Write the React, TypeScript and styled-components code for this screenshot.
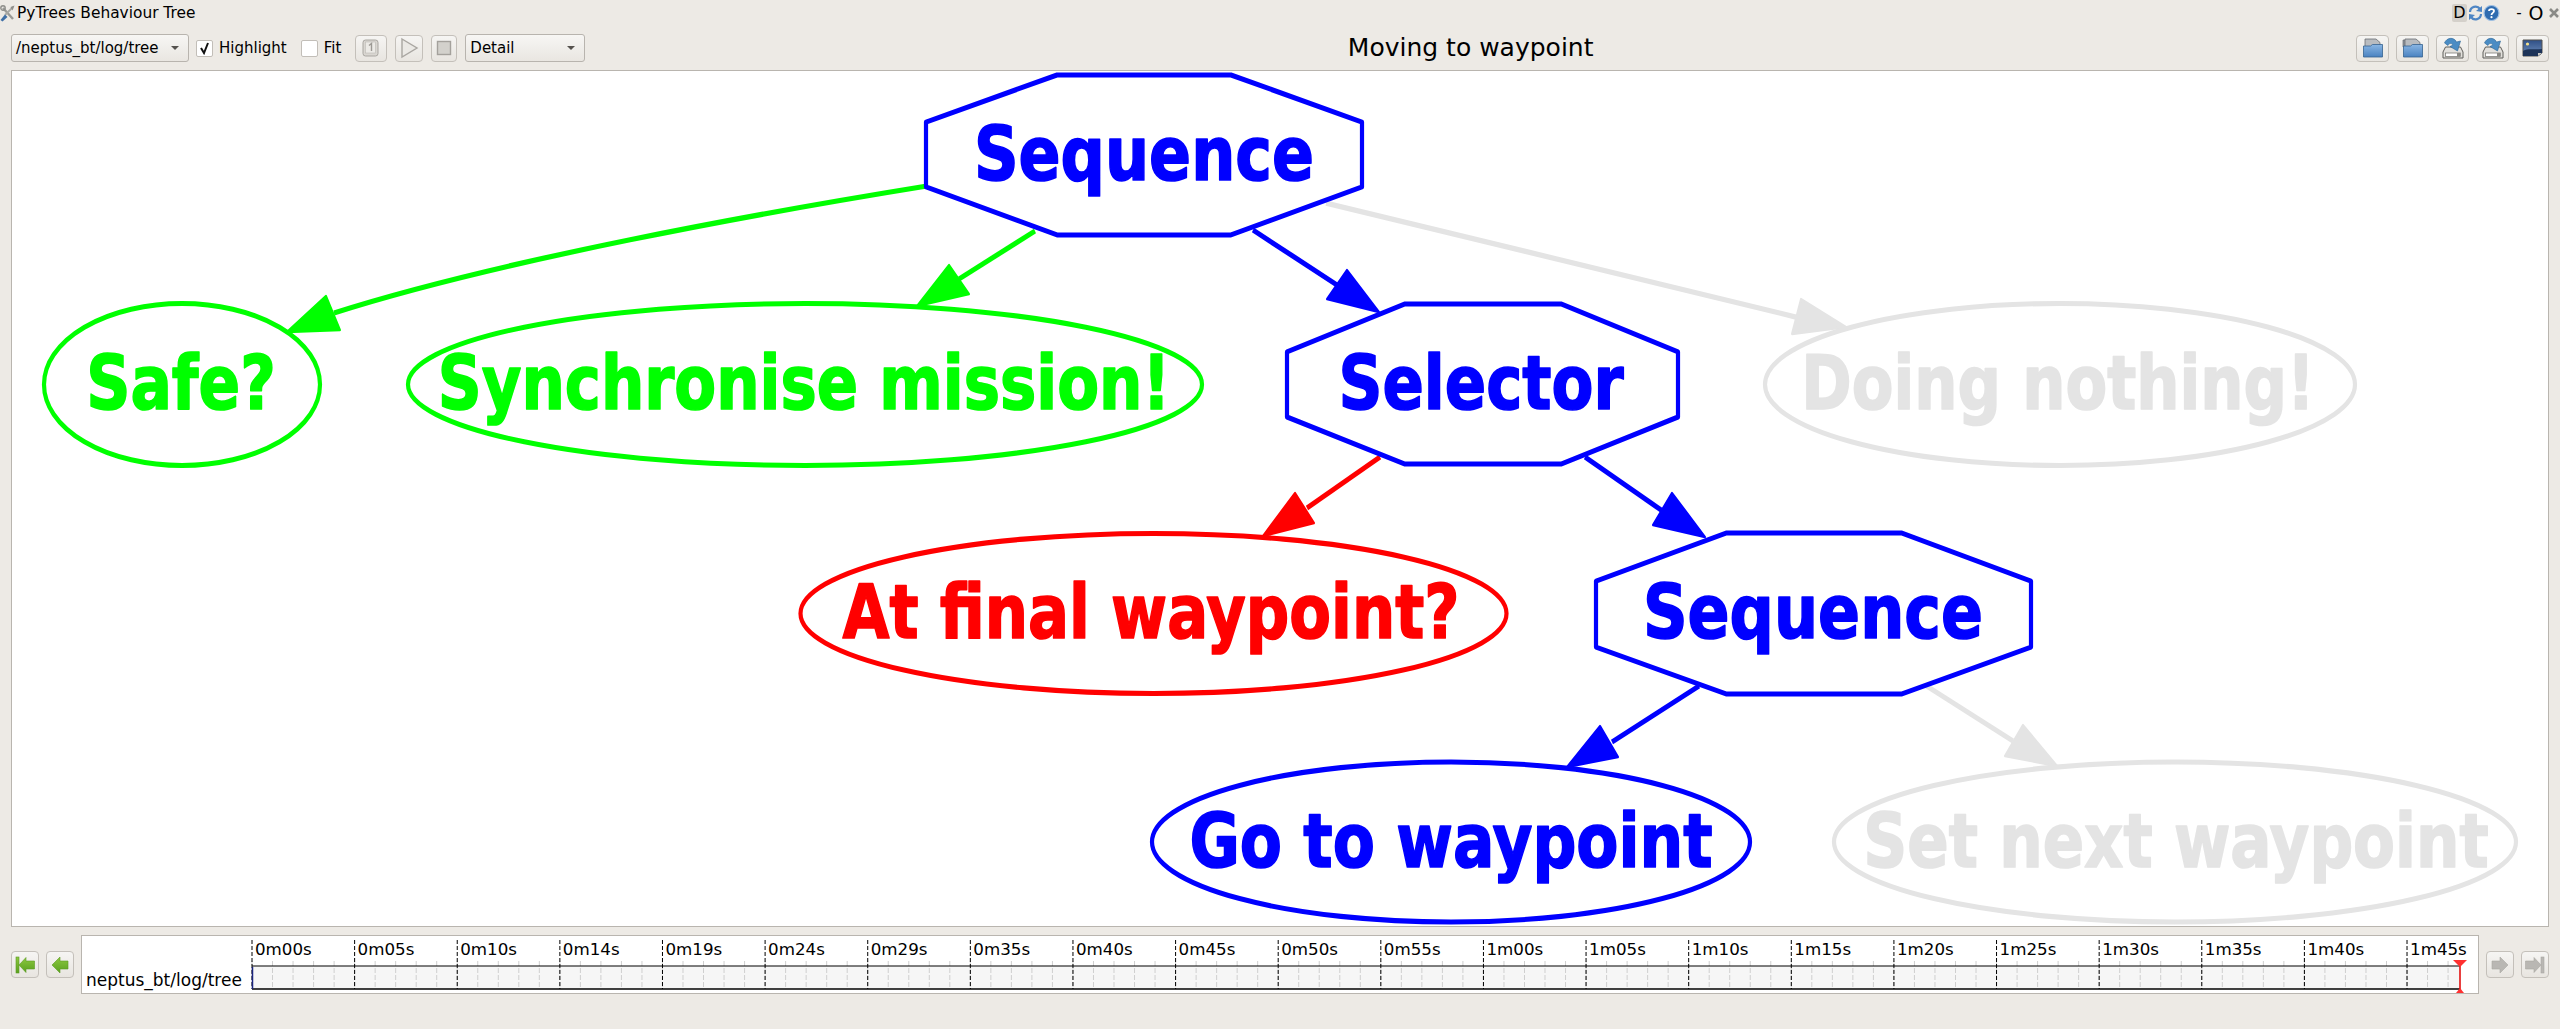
import React from 'react';
import styled, { createGlobalStyle } from 'styled-components';

const GlobalStyle = createGlobalStyle`
  html, body {
    margin: 0;
    padding: 0;
    height: 100%;
    overflow: hidden;
    background: #edeae5;
  }
  #root {
    height: 100%;
  }
`;

const Page = styled.div`
  height: 100vh;
  display: flex;
  flex-direction: column;
  box-sizing: border-box;
  padding: 0 11px 35px;
  background: #edeae5;
  font-family: 'DejaVu Sans', sans-serif;
  font-size: 15px;
  color: #000;
`;

const TitleBar = styled.div`
  height: 34px;
  margin: 0 -11px;
  flex: none;
  display: flex;
  align-items: flex-start;
  padding-top: 4px;
  box-sizing: border-box;
  line-height: 18px;
`;

const AppName = styled.span`
  margin-left: 2px;
  flex: 1;
  font-size: 15.4px;
`;

const TitleTools = styled.div`
  display: flex;
  align-items: center;
  height: 18px;
`;

const DebugKey = styled.span`
  width: 15px;
  height: 18px;
  background: #d4d0ca;
  border-radius: 2px;
  text-align: center;
  font-size: 16px;
  margin-right: 1px;
`;

const WindowGlyph = styled.span<{ $w: number; $size?: number }>`
  width: ${p => p.$w}px;
  text-align: center;
  font-size: ${p => p.$size ?? 16}px;
`;

const Toolbar = styled.div`
  height: 28px;
  flex: none;
  display: flex;
  align-items: center;
  margin-bottom: 8px;
`;

const LeftTools = styled.div`
  display: flex;
  align-items: center;
`;

const Combo = styled.div<{ $w: number; $mr: number }>`
  width: ${p => p.$w}px;
  margin-right: ${p => p.$mr}px;
  height: 28px;
  box-sizing: border-box;
  display: flex;
  align-items: center;
  justify-content: space-between;
  padding: 0 9px 0 4px;
  border: 1px solid #b8b4ae;
  border-radius: 3px;
  background: linear-gradient(#f7f6f4, #e9e6e1);
  font-size: 15px;
`;

const ComboArrow = styled.span`
  width: 0;
  height: 0;
  border-left: 4px solid transparent;
  border-right: 4px solid transparent;
  border-top: 4px solid #55524e;
`;

const CheckRow = styled.label<{ $mr: number }>`
  display: flex;
  align-items: center;
  gap: 6px;
  margin-right: ${p => p.$mr}px;
  font-size: 15px;
`;

const CheckBox = styled.span`
  width: 17px;
  height: 17px;
  box-sizing: border-box;
  border: 1px solid #c2beb8;
  border-radius: 2px;
  background: #fff;
  display: flex;
  align-items: center;
  justify-content: center;
`;

const ToolButton = styled.div<{ $w: number; $mr?: number }>`
  width: ${p => p.$w}px;
  height: 27px;
  margin-right: ${p => p.$mr ?? 0}px;
  box-sizing: border-box;
  flex: none;
  display: flex;
  align-items: center;
  justify-content: center;
  border: 1px solid #c4c0ba;
  border-radius: 4px;
  background: linear-gradient(#f6f5f3, #e8e5e0);
`;

const Heading = styled.div`
  flex: 1;
  text-align: center;
  font-size: 25px;
  line-height: 28px;
`;

const RightTools = styled.div`
  display: flex;
  gap: 7px;
`;

const GraphFrame = styled.div`
  flex: 1;
  min-height: 0;
  border: 1px solid #b9b5af;
  background: #fff;
  overflow: hidden;
`;

const GraphSvg = styled.svg`
  display: block;
  width: 100%;
  height: 100%;
`;

const NodeLabel = styled.text<{ $c: string }>`
  font-family: 'DejaVu Sans', sans-serif;
  font-weight: 700;
  font-size: 62px;
  text-anchor: middle;
  fill: ${p => p.$c};
  stroke: ${p => p.$c};
  stroke-width: 1.4px;
  stroke-linejoin: round;
`;

const TimelineRow = styled.div`
  margin-top: 8px;
  height: 59px;
  flex: none;
  display: flex;
  align-items: flex-start;
  gap: 7px;
`;

const NavButton = styled(ToolButton)`
  margin-top: 16px;
  height: 27px;
`;

const TimelineBox = styled.div`
  flex: 1;
  height: 59px;
  box-sizing: border-box;
  border: 1px solid #b9b5af;
  background: #fff;
  display: flex;
  align-items: flex-end;
  min-width: 0;
`;

const TrackLabel = styled.div`
  width: 163px;
  flex: none;
  box-sizing: border-box;
  padding: 0 0 3px 4px;
  font-size: 17px;
  line-height: 20px;
`;

const TimelineSvg = styled.svg`
  flex: 1;
  display: block;
  height: 57px;
  min-width: 0;
`;

const StampText = styled.text`
  font-family: 'DejaVu Sans', sans-serif;
  font-size: 16.7px;
  fill: #000;
`;

const GREEN = '#00ff00';
const BLUE = '#0000ff';
const RED = '#ff0000';
const GRAY = '#e4e4e4';

// the graph view is stretched a little taller than wide, strokes too
const STRETCH = 1.2;

type Pt = [number, number];

const octagons: { pts: Pt[]; c: string }[] = [
  { c: BLUE, pts: [[1057, 75], [1231, 75], [1362, 122], [1362, 187], [1231, 235], [1057, 235], [926, 187], [926, 122]] },
  { c: BLUE, pts: [[1405, 304], [1561, 304], [1678, 352], [1678, 417], [1561, 464], [1405, 464], [1287, 417], [1287, 352]] },
  { c: BLUE, pts: [[1726, 533], [1902, 533], [2031, 581], [2031, 647], [1902, 694], [1726, 694], [1596, 647], [1596, 581]] },
];

const ellipses = [
  { cx: 182, cy: 384.5, rx: 138, ry: 81, c: GREEN },
  { cx: 805, cy: 384.5, rx: 397, ry: 81, c: GREEN },
  { cx: 2060, cy: 384.5, rx: 295, ry: 81, c: GRAY },
  { cx: 1153.5, cy: 613.5, rx: 353, ry: 80, c: RED },
  { cx: 1451, cy: 842, rx: 299, ry: 80, c: BLUE },
  { cx: 2175, cy: 842, rx: 341, ry: 80, c: GRAY },
];

const labels = [
  { x: 1144, y: 180, sx: 1, t: 'Sequence', c: BLUE },
  { x: 181, y: 409, sx: 0.99, t: 'Safe?', c: GREEN },
  { x: 804, y: 409, sx: 0.983, t: 'Synchronise mission!', c: GREEN },
  { x: 1481, y: 409, sx: 0.985, t: 'Selector', c: BLUE },
  { x: 2058, y: 409, sx: 0.98, t: 'Doing nothing!', c: GRAY },
  { x: 1151, y: 638, sx: 0.98, t: 'At final waypoint?', c: RED },
  { x: 1813, y: 638, sx: 1, t: 'Sequence', c: BLUE },
  { x: 1451, y: 867, sx: 0.99, t: 'Go to waypoint', c: BLUE },
  { x: 2176, y: 867, sx: 0.985, t: 'Set next waypoint', c: GRAY },
];

const edges: { line: Pt[]; head: Pt[]; c: string }[] = [
  { c: GREEN, line: [[927, 186], [760, 213], [500, 260], [334, 313]], head: [[287, 332], [326, 296], [340, 330]] },
  { c: GREEN, line: [[1035, 231], [959, 279]], head: [[917, 306], [949, 265], [969, 294]] },
  { c: BLUE, line: [[1253, 230], [1337, 285]], head: [[1379, 312], [1347, 270], [1327, 299]] },
  { c: GRAY, line: [[1326, 203], [1796, 317]], head: [[1846, 327], [1801, 299], [1792, 334]] },
  { c: RED, line: [[1380, 457], [1307, 508]], head: [[1263, 536], [1295, 493], [1314, 523]] },
  { c: BLUE, line: [[1585, 457], [1664, 512]], head: [[1705, 537], [1672, 493], [1653, 525]] },
  { c: BLUE, line: [[1699, 686], [1612, 742]], head: [[1567, 767], [1600, 726], [1618, 757]] },
  { c: GRAY, line: [[1925, 685], [2013, 741]], head: [[2057, 766], [2023, 725], [2005, 756]] },
];

const stamps = [
  '0m00s', '0m05s', '0m10s', '0m14s', '0m19s', '0m24s', '0m29s', '0m35s', '0m40s', '0m45s', '0m50s',
  '0m55s', '1m00s', '1m05s', '1m10s', '1m15s', '1m20s', '1m25s', '1m30s', '1m35s', '1m40s', '1m45s',
];

const unstretch = (p: Pt) => `${p[0]},${(p[1] / STRETCH).toFixed(1)}`;
const toSvgPoints = (pts: Pt[]) => pts.map(unstretch).join(' ');
const toPath = (pts: Pt[]) =>
  pts.length === 4
    ? `M${unstretch(pts[0])} C${unstretch(pts[1])} ${unstretch(pts[2])} ${unstretch(pts[3])}`
    : `M${unstretch(pts[0])} L${unstretch(pts[1])}`;

const TOOLS_X0 = 7;
const MAJOR_STEP = 102.62;
const MINOR_STEP = MAJOR_STEP / 5;
const TRACK_END = 2215;

const SvgDefs = () => (
  <svg width="0" height="0" style={{ position: 'absolute' }}>
    <defs>
      <linearGradient id="folderBlue" x1="0" y1="0" x2="0" y2="1">
        <stop offset="0" stopColor="#8ab6e4" />
        <stop offset="1" stopColor="#4a82c0" />
      </linearGradient>
      <linearGradient id="greenArrow" x1="0" y1="0" x2="0" y2="1">
        <stop offset="0" stopColor="#8cc83f" />
        <stop offset="1" stopColor="#5aa11f" />
      </linearGradient>
      <linearGradient id="sky" x1="0" y1="0" x2="0" y2="1">
        <stop offset="0" stopColor="#2f4f86" />
        <stop offset="1" stopColor="#6f8fbe" />
      </linearGradient>
    </defs>
  </svg>
);

const ToolsIcon = () => (
  <svg width="15" height="18" viewBox="0 0 15 18">
    <path d="M3 4 L13 15" stroke="#9a9a96" strokeWidth="2.4" />
    <path d="M13 3 L5 11" stroke="#a8a8a4" strokeWidth="1.8" />
    <path d="M14.5 1.5 L10.5 3 L12.5 6.5 Z" fill="#8e8e8a" />
    <path d="M0.5 16 L5 10.5 L7.5 13 L2.5 17.5 Z" fill="#3f6fa6" />
    <circle cx="3" cy="4" r="2.2" fill="none" stroke="#8e8e8a" strokeWidth="1.4" />
  </svg>
);

const RefreshIcon = () => (
  <svg width="15" height="18" viewBox="0 0 15 18">
    <path d="M2 8 A5.5 5.5 0 0 1 12 5" fill="none" stroke="#4f86c4" strokeWidth="2.2" />
    <path d="M14 2 L14 8 L8 7 Z" fill="#4f86c4" />
    <path d="M13 10 A5.5 5.5 0 0 1 3 13" fill="none" stroke="#4f86c4" strokeWidth="2.2" />
    <path d="M1 16 L1 10 L7 11 Z" fill="#4f86c4" />
  </svg>
);

const HelpIcon = () => (
  <svg width="17" height="18" viewBox="0 0 17 18">
    <circle cx="8.5" cy="9" r="7.5" fill="#2f6cb0" stroke="#9fc0e4" strokeWidth="1.2" />
    <path d="M6 7 C6 4.5 11 4.5 11 7 C11 9 8.5 8.8 8.5 11" fill="none" stroke="#fff" strokeWidth="1.8" />
    <circle cx="8.5" cy="13.2" r="1.1" fill="#fff" />
  </svg>
);

const CloseIcon = () => (
  <svg width="12" height="12" viewBox="0 0 12 12">
    <path d="M2 2 L10 10 M10 2 L2 10" stroke="#8a8a86" strokeWidth="2.6" />
  </svg>
);

const CheckMark = () => (
  <svg width="13" height="14" viewBox="0 0 13 14">
    <path d="M3 7 L6 12 L10 2" fill="none" stroke="#111" strokeWidth="2" />
  </svg>
);

const ViewOneIcon = () => (
  <svg width="20" height="20" viewBox="0 0 20 20">
    <rect x="2" y="2" width="15" height="16" rx="2.5" fill="#d9d6d1" stroke="#a9a6a1" />
    <rect x="4.5" y="4" width="10" height="11" fill="#eceae6" stroke="#bcb9b4" strokeWidth="0.6" />
    <path d="M8 7.5 L10.5 5.5 L10.5 13" fill="none" stroke="#9c9994" strokeWidth="1.4" />
  </svg>
);

const PlayIcon = () => (
  <svg width="20" height="22" viewBox="0 0 20 22">
    <path d="M3 2 L18 11 L3 20 Z" fill="#ebe9e5" stroke="#a9a6a1" strokeWidth="1.4" />
  </svg>
);

const StopIcon = () => (
  <svg width="16" height="16" viewBox="0 0 16 16">
    <rect x="1.5" y="1.5" width="13" height="13" fill="#d3d1cc" stroke="#a4a19c" strokeWidth="1.4" />
  </svg>
);

const FolderIcon = ({ double }: { double?: boolean }) => (
  <svg width="22" height="22" viewBox="0 0 22 22">
    {double && <path d="M1 10 L1 3 L9 3 L9 10 Z" fill="#8d929a" stroke="#6a6d72" strokeWidth="0.7" />}
    <path d="M3 10 L3 2 L14 2 L18 5.5 L18 10 Z" fill="#b9bcc0" stroke="#6a6d72" strokeWidth="0.8" />
    <path d="M1.5 9 L8.5 9 L10.5 7.5 L20.5 7.5 L20.5 20 L1.5 20 Z" fill="url(#folderBlue)" stroke="#35628f" strokeWidth="0.8" />
  </svg>
);

const SaveIcon = () => (
  <svg width="22" height="22" viewBox="0 0 22 22">
    <path d="M3.5 10 L18.5 10 L21 15 L21 21 L1 21 L1 15 Z" fill="#e2e0dc" stroke="#5f5e5a" />
    <rect x="3.5" y="16" width="15" height="3.5" fill="#fff" stroke="#6f6e6a" strokeWidth="0.7" />
    <rect x="15" y="16" width="3" height="3.5" fill="#8a8985" />
    <path d="M2.5 6 C4.5 0.5 12 -0.5 14.5 5 L18.5 4 L15.5 14 L8 9.5 L11 8 C9.5 6 7 6 6 8.5 Z" fill="#4a8cc4" stroke="#2a6496" strokeWidth="0.6" />
  </svg>
);

const ImageIcon = () => (
  <svg width="21" height="18" viewBox="0 0 21 18">
    <path d="M1 1 L20 1 L20 14 L16 17 L1 17 Z" fill="url(#sky)" stroke="#54534f" strokeWidth="1" />
    <circle cx="5.5" cy="5" r="1.6" fill="#f4e08a" />
    <path d="M1 12 C6 9 11 11 20 10 L20 14 L16 17 L1 17 Z" fill="#1d3358" />
    <path d="M16 17 L20 14 L16 14 Z" fill="#c9c8c4" />
  </svg>
);

const NavArrow = ({ left, end, active }: { left?: boolean; end?: boolean; active?: boolean }) => {
  const fill = active ? 'url(#greenArrow)' : '#b9b7b3';
  const stroke = active ? '#5b9a22' : '#a9a7a3';
  return (
    <svg width="20" height="18" viewBox="0 0 20 18" style={{ transform: left ? 'none' : 'scaleX(-1)' }}>
      {end && <rect x="1" y="1" width="3" height="16" fill={fill} stroke={stroke} strokeWidth="0.6" />}
      <path
        d={end ? 'M4 9 L11 1.5 L11 5 L19.5 5 L19.5 13 L11 13 L11 16.5 Z' : 'M2 9 L10 1 L10 5 L18 5 L18 13 L10 13 L10 17 Z'}
        fill={fill}
        stroke={stroke}
        strokeWidth="0.6"
      />
    </svg>
  );
};

const App: React.FC = () => {
  const majors = stamps.map((_, i) => TOOLS_X0 + i * MAJOR_STEP);
  const minors: number[] = [];
  for (let x = TOOLS_X0; x < TRACK_END - 2; x += MINOR_STEP) minors.push(x);

  return (
    <Page>
      <GlobalStyle />
      <SvgDefs />
      <TitleBar>
        <ToolsIcon />
        <AppName>PyTrees Behaviour Tree</AppName>
        <TitleTools>
          <DebugKey>D</DebugKey>
          <RefreshIcon />
          <HelpIcon />
          <WindowGlyph $w={14}></WindowGlyph>
          <WindowGlyph $w={10} $size={15}>-</WindowGlyph>
          <WindowGlyph $w={24} $size={19}>O</WindowGlyph>
          <CloseIcon />
        </TitleTools>
      </TitleBar>

      <Toolbar>
        <LeftTools>
          <Combo $w={178} $mr={7}>
            /neptus_bt/log/tree
            <ComboArrow />
          </Combo>
          <CheckRow $mr={14}>
            <CheckBox><CheckMark /></CheckBox>
            Highlight
          </CheckRow>
          <CheckRow $mr={14}>
            <CheckBox />
            Fit
          </CheckRow>
          <ToolButton $w={32} $mr={8}><ViewOneIcon /></ToolButton>
          <ToolButton $w={28} $mr={8}><PlayIcon /></ToolButton>
          <ToolButton $w={26} $mr={8}><StopIcon /></ToolButton>
          <Combo $w={120} $mr={0}>
            Detail
            <ComboArrow />
          </Combo>
        </LeftTools>
        <Heading>Moving to waypoint</Heading>
        <RightTools>
          <ToolButton $w={33}><FolderIcon /></ToolButton>
          <ToolButton $w={33}><FolderIcon double /></ToolButton>
          <ToolButton $w={33}><SaveIcon /></ToolButton>
          <ToolButton $w={33}><SaveIcon /></ToolButton>
          <ToolButton $w={33}><ImageIcon /></ToolButton>
        </RightTools>
      </Toolbar>

      <GraphFrame>
        <GraphSvg viewBox="12 71 2536 855" preserveAspectRatio="none">
          <g transform={`scale(1 ${STRETCH})`}>
            {edges.map((e, i) => (
              <g key={i}>
                <path d={toPath(e.line)} fill="none" stroke={e.c} strokeWidth="4.4" />
                <polygon points={toSvgPoints(e.head)} fill={e.c} stroke={e.c} strokeWidth="2" strokeLinejoin="round" />
              </g>
            ))}
            {ellipses.map((n, i) => (
              <ellipse
                key={i}
                cx={n.cx}
                cy={n.cy / STRETCH}
                rx={n.rx}
                ry={n.ry / STRETCH}
                fill="none"
                stroke={n.c}
                strokeWidth="4.2"
              />
            ))}
            {octagons.map((n, i) => (
              <polygon key={i} points={toSvgPoints(n.pts)} fill="none" stroke={n.c} strokeWidth="4.2" strokeLinejoin="round" />
            ))}
          </g>
          {labels.map((l, i) => (
            <NodeLabel key={i} $c={l.c} transform={`translate(${l.x} ${l.y}) scale(${l.sx} ${STRETCH})`}>
              {l.t}
            </NodeLabel>
          ))}
        </GraphSvg>
      </GraphFrame>

      <TimelineRow>
        <NavButton $w={28}><NavArrow left end active /></NavButton>
        <NavButton $w={28}><NavArrow left active /></NavButton>
        <TimelineBox>
          <TrackLabel>neptus_bt/log/tree</TrackLabel>
          <TimelineSvg viewBox="0 0 2232 57" preserveAspectRatio="xMinYMin meet">
            <rect x={TOOLS_X0} y={30} width={TRACK_END - TOOLS_X0} height={23} fill="#f6f6f6" />
            {minors.map((x, i) => (
              <line key={i} x1={x} x2={x} y1={25} y2={53} stroke="#cfcfcf" strokeWidth="1" strokeDasharray="5 2" />
            ))}
            <line x1={TOOLS_X0} x2={TRACK_END} y1={30} y2={30} stroke="#000" strokeWidth="1.2" />
            <line x1={TOOLS_X0} x2={TRACK_END} y1={53} y2={53} stroke="#000" strokeWidth="1.6" />
            {majors.map((x, i) => (
              <g key={i}>
                <line x1={x} x2={x} y1={4} y2={53} stroke="#000" strokeWidth="1" strokeDasharray="4 2" />
                <StampText x={x + 3} y={19}>{stamps[i]}</StampText>
              </g>
            ))}
            <line x1={TOOLS_X0 + 0.5} x2={TOOLS_X0 + 0.5} y1={31} y2={53} stroke="#1a237e" strokeWidth="1.5" />
            <line x1={TRACK_END} x2={TRACK_END} y1={27} y2={55} stroke="#e00000" strokeWidth="1.5" />
            <polygon points={`${TRACK_END - 7},24 ${TRACK_END + 7},24 ${TRACK_END},31`} fill="#ff3030" />
            <polygon points={`${TRACK_END - 4},57 ${TRACK_END + 4},57 ${TRACK_END},52`} fill="#ff3030" />
          </TimelineSvg>
        </TimelineBox>
        <NavButton $w={28}><NavArrow /></NavButton>
        <NavButton $w={28}><NavArrow end /></NavButton>
      </TimelineRow>
    </Page>
  );
};

export default App;
